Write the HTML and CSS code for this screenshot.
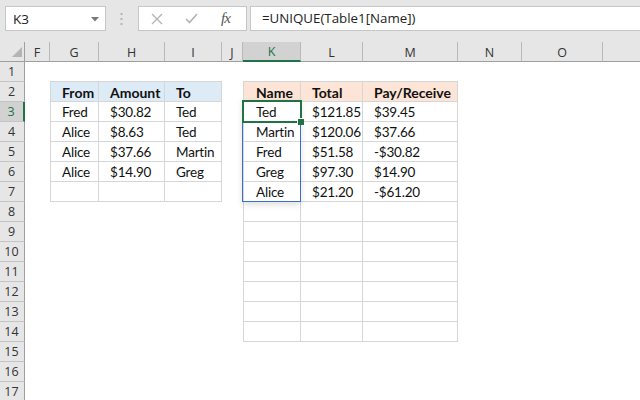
FILE: index.html
```html
<!DOCTYPE html>
<html>
<head>
<meta charset="utf-8">
<link rel="stylesheet" href="styles.css">
</head>
<body>
<div class="app">
  <div class="fbar">
    <div class="namebox">
      <span class="nb-text">K3</span>
      <svg class="caret" width="8" height="5" viewBox="0 0 8 5"><path d="M0 0H8L4 4.5Z" fill="#7a7a7a"/></svg>
    </div>
    <div class="grip">
      <svg width="3" height="12" viewBox="0 0 3 12"><rect x="0.5" y="0" width="2" height="2" fill="#b4b4b4"/><rect x="0.5" y="5" width="2" height="2" fill="#b4b4b4"/><rect x="0.5" y="10" width="2" height="2" fill="#b4b4b4"/></svg>
    </div>
    <div class="btns">
      <svg class="ico" width="12" height="12" viewBox="0 0 12 12"><path d="M1 1L11 11M11 1L1 11" stroke="#b3b3b3" stroke-width="1.3" fill="none"/></svg>
      <svg class="ico" width="13" height="11" viewBox="0 0 13 11"><path d="M1 6L4.5 9.5L12 1" stroke="#b3b3b3" stroke-width="1.6" fill="none"/></svg>
      <span class="fx">fx</span>
    </div>
    <div class="formula">=UNIQUE(Table1[Name])</div>
  </div>

  <div class="sheet">
    <div class="ch corner"><svg width="10" height="10" viewBox="0 0 10 10"><path d="M10 0V10H0Z" fill="#b4b4b4"/></svg></div>
    <div class="ch">F</div>
    <div class="ch">G</div>
    <div class="ch">H</div>
    <div class="ch">I</div>
    <div class="ch">J</div>
    <div class="ch sel">K</div>
    <div class="ch">L</div>
    <div class="ch">M</div>
    <div class="ch">N</div>
    <div class="ch">O</div>
    <div class="ch last"></div>

    <div class="rh r1">1</div>
    <div class="rh r2">2</div>
    <div class="rh r3 sel">3</div>
    <div class="rh r4">4</div>
    <div class="rh r5">5</div>
    <div class="rh r6">6</div>
    <div class="rh r7">7</div>
    <div class="rh r8">8</div>
    <div class="rh r9">9</div>
    <div class="rh r10">10</div>
    <div class="rh r11">11</div>
    <div class="rh r12">12</div>
    <div class="rh r13">13</div>
    <div class="rh r14">14</div>
    <div class="rh r15">15</div>
    <div class="rh r16">16</div>
    <div class="rh r17">17</div>

    <div class="tbl t1">
      <div class="c hd blue">From</div><div class="c hd blue">Amount</div><div class="c hd blue">To</div>
      <div class="c">Fred</div><div class="c">$30.82</div><div class="c">Ted</div>
      <div class="c">Alice</div><div class="c">$8.63</div><div class="c">Ted</div>
      <div class="c">Alice</div><div class="c">$37.66</div><div class="c">Martin</div>
      <div class="c">Alice</div><div class="c">$14.90</div><div class="c">Greg</div>
      <div class="c"></div><div class="c"></div><div class="c"></div>
    </div>

    <div class="tbl t2">
      <div class="c hd peach">Name</div><div class="c hd peach">Total</div><div class="c hd peach">Pay/Receive</div>
      <div class="c">Ted</div><div class="c">$121.85</div><div class="c">$39.45</div>
      <div class="c">Martin</div><div class="c">$120.06</div><div class="c">$37.66</div>
      <div class="c">Fred</div><div class="c">$51.58</div><div class="c">-$30.82</div>
      <div class="c">Greg</div><div class="c">$97.30</div><div class="c">$14.90</div>
      <div class="c">Alice</div><div class="c">$21.20</div><div class="c">-$61.20</div>
      <div class="c"></div><div class="c"></div><div class="c"></div>
      <div class="c"></div><div class="c"></div><div class="c"></div>
      <div class="c"></div><div class="c"></div><div class="c"></div>
      <div class="c"></div><div class="c"></div><div class="c"></div>
      <div class="c"></div><div class="c"></div><div class="c"></div>
      <div class="c"></div><div class="c"></div><div class="c"></div>
      <div class="c"></div><div class="c"></div><div class="c"></div>
    </div>

    <div class="spill"></div>
    <div class="active"><span class="handle"></span></div>
  </div>
</div>
</body>
</html>
```

FILE: styles.css
```css
* { box-sizing: border-box; }
html, body { margin: 0; padding: 0; }
body {
  width: 640px;
  height: 400px;
  overflow: hidden;
  background: #ffffff;
  font-family: "Open Sans", "Noto Sans", sans-serif;
}
.app { width: 640px; height: 400px; overflow: hidden; }

.fbar {
  height: 42px;
  background: #e6e6e6;
  display: flex;
  align-items: flex-start;
  padding: 6px 0 0 5px;
}
.namebox {
  width: 101px;
  height: 25px;
  background: #fff;
  border: 1px solid #c6c6c6;
  display: flex;
  align-items: center;
  justify-content: space-between;
  padding: 0 6px 0 7px;
}
.nb-text { font-size: 13.5px; color: #222; }
.caret { margin-top: 1px; }
.grip {
  width: 32px;
  height: 25px;
  display: flex;
  align-items: center;
  justify-content: center;
  padding-right: 2px;
}
.btns {
  width: 109px;
  height: 25px;
  background: #fff;
  border: 1px solid #c6c6c6;
  display: flex;
  align-items: center;
  padding-left: 12px;
}
.btns .ico:first-child { margin-right: 22px; }
.btns .ico:nth-child(2) { margin-right: 23px; }
.fx {
  font-family: "Liberation Serif", "DejaVu Serif", serif;
  font-style: italic;
  font-size: 15px;
  color: #555;
  letter-spacing: -1px;
  line-height: 1;
}
.formula {
  flex: 1;
  margin-left: 3px;
  height: 25px;
  background: #fff;
  border: 1px solid #c6c6c6;
  border-right: none;
  font-size: 13.3px;
  color: #222;
  padding-left: 11px;
  line-height: 23px;
}

.sheet {
  display: grid;
  grid-template-columns: 25px 25px 49px 66px 57px 21px 58px 62px 95px 64px 81px 1fr;
  grid-template-rows: repeat(18, 20px);
  background: #fff;
}
.ch {
  grid-row: 1;
  background: #e6e6e6;
  border-right: 1px solid #b9b9b9;
  border-bottom: 1px solid #9f9f9f;
  font-size: 12.5px;
  color: #333;
  display: flex;
  align-items: center;
  justify-content: center;
  padding-top: 1px;
}
.ch.corner {
  border-right: 1px solid #9f9f9f;
  align-items: flex-end;
  justify-content: flex-end;
  padding: 0 2px 4px 0;
}
.ch.last { border-right: none; }
.ch.sel {
  background: #d2d2d2;
  color: #217346;
  border-bottom: 2px solid #217346;
}
.rh {
  grid-column: 1;
  background: #e6e6e6;
  border-right: 1px solid #9f9f9f;
  border-bottom: 1px solid #c4c4c4;
  font-size: 12.5px;
  color: #333;
  display: flex;
  align-items: center;
  justify-content: center;
  padding-right: 1px;
}
.rh.sel {
  background: #d2d2d2;
  color: #217346;
  border-right: 2px solid #217346;
}
.r1 { grid-row: 2; } .r2 { grid-row: 3; } .r3 { grid-row: 4; } .r4 { grid-row: 5; }
.r5 { grid-row: 6; } .r6 { grid-row: 7; } .r7 { grid-row: 8; } .r8 { grid-row: 9; }
.r9 { grid-row: 10; } .r10 { grid-row: 11; } .r11 { grid-row: 12; } .r12 { grid-row: 13; }
.r13 { grid-row: 14; } .r14 { grid-row: 15; } .r15 { grid-row: 16; } .r16 { grid-row: 17; }
.r17 { grid-row: 18; }

.tbl {
  display: grid;
  align-self: start;
  margin-top: -1px;
  border-left: 1px solid #d6d6d6;
  border-top: 1px solid #d6d6d6;
  grid-auto-rows: 20px;
  font-family: "Lato", "Liberation Sans", sans-serif;
  font-size: 13.5px;
  color: #111;
  position: relative;
  z-index: 1;
}
.t1 {
  grid-column: 3 / 6;
  grid-row: 3 / 9;
  grid-template-columns: 48px 66px 57px;
}
.t2 {
  grid-column: 7 / 10;
  grid-row: 3 / 16;
  grid-template-columns: 57px 62px 95px;
}
.c {
  border-right: 1px solid #d6d6d6;
  border-bottom: 1px solid #d6d6d6;
  padding-left: 11px;
  line-height: 21px;
  white-space: nowrap;
  overflow: hidden;
  letter-spacing: -0.2px;
}
.hd { font-size: 14px; font-weight: 700; letter-spacing: 0; }
.t1 .c:nth-child(3n+1) { padding-left: 11px; }
.t2 .c:nth-child(3n+1) { padding-left: 12px; }
.blue { background: #ddebf7; }
.peach { background: #fce4d6; }

.spill {
  grid-column: 7;
  grid-row: 4 / 9;
  margin: -2px 0 0 -1px;
  height: 102px;
  border: 1px solid #3c6fc8;
  box-shadow: 0 3px 6px rgba(0, 0, 0, 0.12);
  z-index: 2;
}
.active {
  grid-column: 7;
  grid-row: 4;
  margin: -2px -1px -1px -1px;
  border: 2px solid #217346;
  position: relative;
  z-index: 3;
}
.handle {
  position: absolute;
  right: -4px;
  bottom: -4px;
  width: 7px;
  height: 7px;
  background: #217346;
  border: 1px solid #fff;
  border-right: none;
  border-bottom: none;
}
```
